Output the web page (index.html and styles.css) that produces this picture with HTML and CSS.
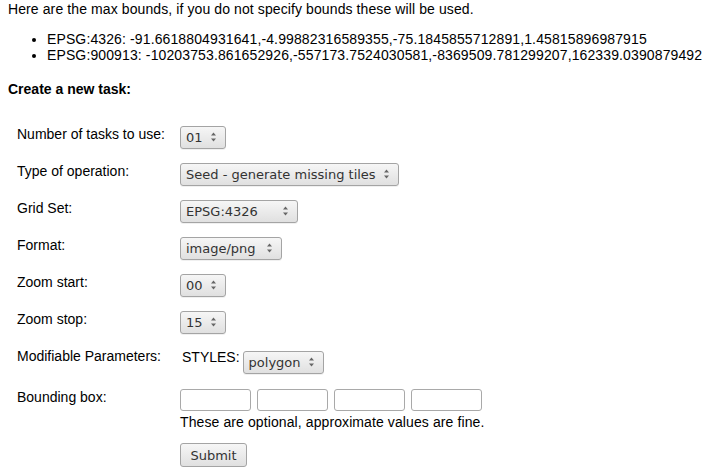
FILE: index.html
```html
<!DOCTYPE html>
<html>
<head>
<meta charset="utf-8">
<link rel="stylesheet" href="styles.css">
</head>
<body>
<p class="intro">Here are the max bounds, if you do not specify bounds these will be used.</p>
<ul class="bounds">
  <li>EPSG:4326: -91.6618804931641,-4.99882316589355,-75.1845855712891,1.45815896987915</li>
  <li>EPSG:900913: -10203753.861652926,-557173.7524030581,-8369509.781299207,162339.0390879492</li>
</ul>
<h4 class="heading">Create a new task:</h4>
<form class="task-form">
  <div class="row">
    <label class="lbl">Number of tasks to use:</label>
    <span class="sel"><select class="control"><option>01</option><option>02</option><option>03</option><option>04</option></select><svg class="arrows" width="5" height="10" viewBox="0 0 5 10"><path d="M0 3.5 L2.5 0.5 L5 3.5 Z M0 6.5 L5 6.5 L2.5 9.5 Z"/></svg></span>
  </div>
  <div class="row">
    <label class="lbl">Type of operation:</label>
    <span class="sel"><select class="control"><option>Seed - generate missing tiles</option><option>Reseed - regenerate all tiles</option><option>Truncate - remove tiles</option></select><svg class="arrows" width="5" height="10" viewBox="0 0 5 10"><path d="M0 3.5 L2.5 0.5 L5 3.5 Z M0 6.5 L5 6.5 L2.5 9.5 Z"/></svg></span>
  </div>
  <div class="row">
    <label class="lbl">Grid Set:</label>
    <span class="sel"><select class="control"><option>EPSG:4326</option><option>EPSG:900913</option></select><svg class="arrows" width="5" height="10" viewBox="0 0 5 10"><path d="M0 3.5 L2.5 0.5 L5 3.5 Z M0 6.5 L5 6.5 L2.5 9.5 Z"/></svg></span>
  </div>
  <div class="row">
    <label class="lbl">Format:</label>
    <span class="sel"><select class="control"><option>image/png</option><option>image/jpeg</option><option>image/gif</option></select><svg class="arrows" width="5" height="10" viewBox="0 0 5 10"><path d="M0 3.5 L2.5 0.5 L5 3.5 Z M0 6.5 L5 6.5 L2.5 9.5 Z"/></svg></span>
  </div>
  <div class="row">
    <label class="lbl">Zoom start:</label>
    <span class="sel"><select class="control"><option>00</option><option>01</option><option>02</option><option>15</option></select><svg class="arrows" width="5" height="10" viewBox="0 0 5 10"><path d="M0 3.5 L2.5 0.5 L5 3.5 Z M0 6.5 L5 6.5 L2.5 9.5 Z"/></svg></span>
  </div>
  <div class="row">
    <label class="lbl">Zoom stop:</label>
    <span class="sel"><select class="control"><option>15</option><option>00</option><option>01</option><option>02</option></select><svg class="arrows" width="5" height="10" viewBox="0 0 5 10"><path d="M0 3.5 L2.5 0.5 L5 3.5 Z M0 6.5 L5 6.5 L2.5 9.5 Z"/></svg></span>
  </div>
  <div class="row row-params">
    <label class="lbl">Modifiable Parameters:</label>
    <div class="params">
      <span class="param-name">STYLES:</span>
      <span class="sel sel-param"><select class="control"><option>polygon</option></select><svg class="arrows" width="5" height="10" viewBox="0 0 5 10"><path d="M0 3.5 L2.5 0.5 L5 3.5 Z M0 6.5 L5 6.5 L2.5 9.5 Z"/></svg></span>
    </div>
  </div>
  <div class="row row-bbox">
    <label class="lbl">Bounding box:</label>
    <div class="bbox">
      <div class="bbox-inputs">
        <input class="coord" type="text">
        <input class="coord" type="text">
        <input class="coord" type="text">
        <input class="coord" type="text">
      </div>
      <div class="hint">These are optional, approximate values are fine.</div>
      <button class="submit" type="button">Submit</button>
    </div>
  </div>
</form>
</body>
</html>
```

FILE: styles.css
```css
html {
  background: #fff;
}

body {
  margin: 1px 8px 8px;
  font-family: "Liberation Sans", Arial, sans-serif;
  font-size: 14px;
  line-height: 16px;
  color: #000;
}

.intro {
  margin: 0 0 14px;
  letter-spacing: 0.1px;
}

.bounds {
  margin: 0;
  padding-left: 39px;
  letter-spacing: 0.12px;
}

.heading {
  margin: 18px 0 0;
  font-size: 14px;
  font-weight: bold;
}

.task-form {
  margin-top: 22px;
  padding-left: 9px;
}

.row {
  display: flex;
  align-items: flex-start;
  padding: 7px 0;
}

.lbl {
  flex: 0 0 163px;
  width: 163px;
}

.sel {
  position: relative;
  display: inline-block;
}

.control {
  -webkit-appearance: none;
  appearance: none;
  box-sizing: border-box;
  height: 23px;
  margin: 0;
  padding: 0 22px 0 5px;
  border: 1px solid #a4a4a4;
  border-radius: 3px;
  background: linear-gradient(#f6f6f6, #e0e0e0);
  font-family: "DejaVu Sans", sans-serif;
  font-size: 13px;
  color: #333;
  box-shadow: 0 1px 0 rgba(0, 0, 0, 0.06);
}

.arrows {
  position: absolute;
  right: 10px;
  top: 6px;
  fill: #666;
  pointer-events: none;
}

.row-params {
  padding: 7px 0 8px;
}

.params {
  display: flex;
  align-items: flex-start;
}

.param-name {
  padding-left: 2px;
  margin-top: 1px;
  margin-right: 3px;
}

.sel-param {
  margin-top: 3px;
}

.bbox {
  display: flex;
  flex-direction: column;
  align-items: flex-start;
}

.bbox-inputs {
  display: flex;
  gap: 6px;
}

.coord {
  box-sizing: border-box;
  width: 71px;
  height: 22px;
  margin: 0;
  padding: 0 4px;
  border: 1px solid #a9a9a9;
  border-radius: 3px;
  background: #fff;
  font-family: "DejaVu Sans", sans-serif;
  font-size: 13px;
}

.hint {
  margin-top: 3px;
  letter-spacing: 0.1px;
}

.submit {
  -webkit-appearance: none;
  appearance: none;
  box-sizing: border-box;
  margin-top: 13px;
  width: 67px;
  height: 24px;
  padding: 0;
  border: 1px solid #a4a4a4;
  border-radius: 3px;
  background: linear-gradient(#f6f6f6, #e0e0e0);
  font-family: "DejaVu Sans", sans-serif;
  font-size: 13px;
  color: #333;
}
```
